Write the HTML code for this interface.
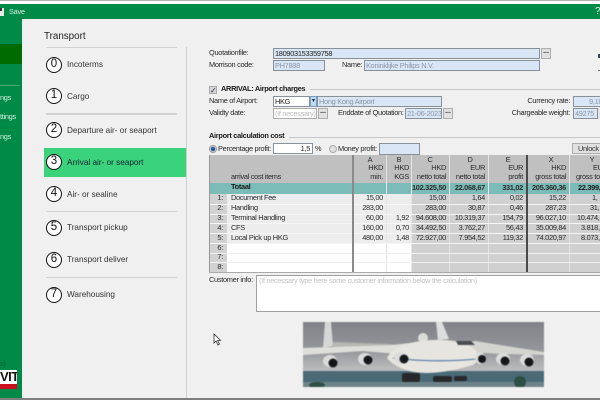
<!DOCTYPE html>
<html><head><meta charset="utf-8">
<style>
html,body{margin:0;padding:0;width:600px;height:400px;overflow:hidden;background:#f0f0f0;font-family:"Liberation Sans",sans-serif;}
#r{position:relative;width:600px;height:400px;overflow:hidden;filter:blur(.3px);}
.a{position:absolute;}
.t{position:absolute;font-size:7.4px;letter-spacing:-.3px;line-height:10px;color:#2a2a2a;white-space:nowrap;}
.b{font-weight:bold;color:#1a1a1a;}
.i{position:absolute;background:#d9e6f5;border:1px solid #88909a;box-sizing:border-box;font-size:7.4px;letter-spacing:-.3px;line-height:9px;color:#8a97a6;padding-left:1px;white-space:nowrap;overflow:hidden;}
.w{background:#fff;color:#222;}
.btn{position:absolute;background:#e1e1e1;border:1px solid #adadad;box-sizing:border-box;font-size:7px;line-height:5px;text-align:center;color:#222;font-weight:bold;}
.c{position:absolute;left:46px;width:16px;height:16px;box-sizing:border-box;border:1.3px solid #111;border-radius:50%;background:#fff;font-size:11.5px;line-height:13.5px;text-align:center;color:#111;}
.l{position:absolute;left:67px;font-size:8.2px;line-height:12px;color:#333;white-space:nowrap;}
.s{position:absolute;left:46px;width:131px;height:1px;background:#d2d2d2;}
.r{position:absolute;font-size:7.4px;letter-spacing:-.3px;line-height:10px;color:#2a2a2a;text-align:right;white-space:nowrap;}
</style></head><body><div id="r">
<div class="a" style="left:0;top:0;width:600px;height:1px;background:#b4b4b4"></div>
<div class="a" style="left:0;top:1px;width:600px;height:3px;background:#fff"></div>
<div class="a" style="left:0;top:4px;width:600px;height:15px;background:#008a47"></div>
<div class="a" style="left:0;top:19px;width:22px;height:379px;background:#008a47"></div>
<div class="a" style="left:0;top:44px;width:22px;height:20px;background:#006b00"></div>
<div class="a" style="left:0;top:85px;width:20px;height:1px;background:#3fa873"></div>
<div class="a" style="left:0;top:8px;width:4px;height:8px;background:#e8e8e8"></div>
<div class="a" style="left:0;top:8px;width:2px;height:3px;background:#333"></div>
<div class="t" style="left:9px;top:7px;color:#d5f0e0">Save</div>
<div class="t" style="left:595px;top:7px;color:#e8f5ee;font-size:10px">?</div>
<div class="t" style="left:0;top:93px;color:#cfeedd">ngs</div>
<div class="t" style="left:0;top:112px;color:#cfeedd">ttings</div>
<div class="t" style="left:0;top:132px;color:#cfeedd">ngs</div>
<div class="t" style="left:0;top:359px;color:#063">s)</div>
<div class="a" style="left:0;top:370px;width:17px;height:14px;background:#fff;color:#111;font-size:13px;line-height:14px;font-weight:bold;overflow:hidden;letter-spacing:-.5px">VIT</div>
<div class="a" style="left:0;top:384px;width:17px;height:5px;background:#c8101e"></div>
<div class="a" style="left:0;top:398px;width:600px;height:2px;background:#7e7e7e"></div>

<div class="a" style="left:44px;top:30px;font-size:9.8px;line-height:13px;color:#222">Transport</div>
<div class="a" style="left:186px;top:47px;width:1px;height:351px;background:#d0d0d0"></div>
<div class="s" style="top:47px"></div>
<div class="s" style="top:113px;height:2px"></div>
<div class="s" style="top:211px"></div>
<div class="s" style="top:277px"></div>
<div class="a" style="left:44px;top:148px;width:142px;height:29px;background:#3ad27a"></div>
<div class="c" style="top:57px">0</div><div class="l" style="top:59px">Incoterms</div>
<div class="c" style="top:88px">1</div><div class="l" style="top:91px">Cargo</div>
<div class="c" style="top:122px">2</div><div class="l" style="top:125px">Departure air- or seaport</div>
<div class="c" style="top:154px">3</div><div class="l" style="top:157px;color:#123">Arrival air- or seaport</div>
<div class="c" style="top:186px">4</div><div class="l" style="top:189px">Air- or sealine</div>
<div class="c" style="top:220px">5</div><div class="l" style="top:222px">Transport pickup</div>
<div class="c" style="top:252px">6</div><div class="l" style="top:254px">Transport deliver</div>
<div class="c" style="top:287px">7</div><div class="l" style="top:289px">Warehousing</div>

<div class="t" style="left:209px;top:48px">Quotationfile:</div>
<div class="i w" style="left:273px;top:48px;width:267px;height:11px;background:#d9e6f5;color:#222">180903153359758</div>
<div class="btn" style="left:541px;top:48px;width:10px;height:11px">...</div>
<div class="t" style="left:209px;top:60px">Morrison code:</div>
<div class="i" style="left:273px;top:60px;width:52px;height:11px">PH7888</div>
<div class="t" style="left:342px;top:60px">Name:</div>
<div class="i" style="left:364px;top:60px;width:176px;height:11px">Koninklijke Philips N.V.</div>
<div class="a" style="left:598px;top:54px;width:2px;height:4px;background:#345"></div>
<div class="a" style="left:598px;top:70px;width:2px;height:1px;background:#666"></div>

<div class="a" style="left:310px;top:89px;width:290px;height:1px;background:#c8c8c8"></div>
<div class="a" style="left:209px;top:86px;width:8px;height:8px;background:#d6d6d6;border:1px solid #aaa;box-sizing:border-box;color:#225;font-size:8px;line-height:7px;text-align:center">✓</div>
<div class="t b" style="left:221px;top:84px">ARRIVAL: Airport charges</div>
<div class="t" style="left:209px;top:96px">Name of Airport:</div>
<div class="i w" style="left:273px;top:96px;width:37px;height:11px">HKG</div>
<div class="a" style="left:310px;top:96px;width:7px;height:11px;background:#bcdcf5;border:1px solid #7a9cc0;box-sizing:border-box;color:#223;font-size:6px;line-height:9px;text-align:center">▾</div>
<div class="i" style="left:317px;top:96px;width:125px;height:11px">Hong Kong Airport</div>
<div class="t" style="left:209px;top:108px">Validty date:</div>
<div class="i w" style="left:273px;top:108px;width:44px;height:11px;color:#bbb;border-color:#aaa">(If necessary)</div>
<div class="btn" style="left:318px;top:108px;width:10px;height:11px">...</div>
<div class="t" style="left:338px;top:108px">Enddate of Quotation:</div>
<div class="i" style="left:405px;top:108px;width:37px;height:11px">21-06-2023</div>
<div class="btn" style="left:443px;top:108px;width:10px;height:11px">...</div>
<div class="r" style="left:480px;width:90px;top:96px">Currency rate:</div>
<div class="i" style="left:573px;top:96px;width:40px;height:11px;padding-left:15px">9,16</div>
<div class="r" style="left:480px;width:90px;top:108px">Chargeable weight:</div>
<div class="i" style="left:573px;top:108px;width:25px;height:11px">49275</div>
<div class="a" style="left:598px;top:108px;width:2px;height:11px;background:#e4e4e4"></div>

<div class="t b" style="left:209px;top:131px">Airport calculation cost</div>
<div class="a" style="left:289px;top:137px;width:311px;height:1px;background:#c8c8c8"></div>
<div class="a" style="left:209px;top:145px;width:8px;height:8px;border-radius:50%;background:radial-gradient(circle,#2a5d8f 0 2px,#dde 2.5px);border:1px solid #999;box-sizing:border-box"></div>
<div class="t" style="left:218px;top:144px">Percentage profit:</div>
<div class="i w" style="left:273px;top:143px;width:40px;height:11px;text-align:right;padding-right:2px">1,5</div>
<div class="t" style="left:315px;top:144px">%</div>
<div class="a" style="left:329px;top:145px;width:8px;height:8px;border-radius:50%;background:#e0e0e0;border:1px solid #aaa;box-sizing:border-box"></div>
<div class="t" style="left:338px;top:144px">Money profit:</div>
<div class="i" style="left:379px;top:143px;width:41px;height:12px"></div>
<div class="a" style="left:572px;top:143px;width:30px;height:11px;background:#e1e1e1;border:1px solid #adadad;box-sizing:border-box;font-size:7.4px;letter-spacing:-.3px;line-height:9px;color:#333;padding-left:5px">Unlock</div>

<!-- table -->
<div class="a" style="left:209px;top:155px;width:391px;height:118px;background:#ededed"></div>
<div class="a" style="left:209px;top:155px;width:391px;height:28px;background:#c0c0c0"></div>
<div class="a" style="left:209px;top:183px;width:391px;height:11px;background:#7bbcb8"></div>
<div class="a" style="left:209px;top:194px;width:18px;height:79px;background:#d2d2d2"></div>
<div class="a" style="left:227px;top:244px;width:125px;height:28px;background:#fff"></div>
<div class="a" style="left:354px;top:244px;width:57px;height:28px;background:#fff"></div>
<div class="a" style="left:411px;top:194px;width:189px;height:78px;background:#d0d0d0"></div>
<div class="a" style="left:449px;top:155px;width:1px;height:117px;background:#e4e4e4"></div>
<div class="a" style="left:488px;top:155px;width:1px;height:117px;background:#e4e4e4"></div>
<div class="a" style="left:569px;top:155px;width:1px;height:117px;background:#e4e4e4"></div>
<div class="a" style="left:386px;top:155px;width:1px;height:117px;background:#e4e4e4"></div>
<div class="a" style="left:411px;top:155px;width:1px;height:117px;background:#e4e4e4"></div>
<div class="a" style="left:209px;top:204px;width:391px;height:1px;background:#f6f6f6"></div>
<div class="a" style="left:209px;top:214px;width:391px;height:1px;background:#f6f6f6"></div>
<div class="a" style="left:209px;top:223px;width:391px;height:1px;background:#f6f6f6"></div>
<div class="a" style="left:209px;top:233px;width:391px;height:1px;background:#f6f6f6"></div>
<div class="a" style="left:209px;top:243px;width:391px;height:1px;background:#f6f6f6"></div>
<div class="a" style="left:209px;top:253px;width:391px;height:1px;background:#f0f0f0"></div>
<div class="a" style="left:209px;top:262px;width:391px;height:1px;background:#f0f0f0"></div>
<div class="a" style="left:352px;top:155px;width:2px;height:117px;background:#8a8a8a"></div>
<div class="a" style="left:526px;top:155px;width:2px;height:117px;background:#4a4a4a"></div>
<div class="a" style="left:209px;top:155px;width:1px;height:118px;background:#999"></div>
<div class="a" style="left:209px;top:272px;width:391px;height:1px;background:#aaa"></div>

<div class="t" style="left:231px;top:172px">arrival cost items</div>
<div class="r" style="left:354px;width:32px;top:155px;text-align:center">A</div>
<div class="r" style="left:354px;width:29px;top:163px">HKD</div>
<div class="r" style="left:354px;width:29px;top:172px">min.</div>
<div class="r" style="left:387px;width:24px;top:155px;text-align:center">B</div>
<div class="r" style="left:387px;width:22px;top:163px">HKD</div>
<div class="r" style="left:387px;width:22px;top:172px">KGS</div>
<div class="r" style="left:411px;width:38px;top:155px;text-align:center">C</div>
<div class="r" style="left:411px;width:35px;top:163px">HKD</div>
<div class="r" style="left:411px;width:35px;top:172px">netto total</div>
<div class="r" style="left:450px;width:40px;top:155px;text-align:center">D</div>
<div class="r" style="left:450px;width:35px;top:163px">EUR</div>
<div class="r" style="left:450px;width:35px;top:172px">netto total</div>
<div class="r" style="left:489px;width:38px;top:155px;text-align:center">E</div>
<div class="r" style="left:489px;width:34px;top:163px">EUR</div>
<div class="r" style="left:489px;width:34px;top:172px">profit</div>
<div class="r" style="left:528px;width:46px;top:155px;text-align:center">X</div>
<div class="r" style="left:528px;width:38px;top:163px">HKD</div>
<div class="r" style="left:528px;width:38px;top:172px">gross total</div>
<div class="r" style="left:570px;width:44px;top:155px;text-align:center">Y</div>
<div class="t" style="left:593px;top:163px">EU</div>
<div class="t" style="left:576px;top:172px">gross to</div>

<div class="t b" style="left:231px;top:182px">Totaal</div>
<div class="r b" style="left:411px;width:35px;top:183px">102.325,50</div>
<div class="r b" style="left:450px;width:35px;top:183px">22.068,67</div>
<div class="r b" style="left:489px;width:34px;top:183px">331,02</div>
<div class="r b" style="left:528px;width:38px;top:183px">205.360,36</div>
<div class="t b" style="left:578px;top:183px">22.399,</div>

<div class="r" style="left:209px;width:14px;top:193px">1:</div>
<div class="t" style="left:231px;top:193px">Document Fee</div>
<div class="r" style="left:354px;width:29px;top:193px">15,00</div>
<div class="r" style="left:411px;width:35px;top:193px">15,00</div>
<div class="r" style="left:450px;width:35px;top:193px">1,64</div>
<div class="r" style="left:489px;width:34px;top:193px">0,02</div>
<div class="r" style="left:528px;width:38px;top:193px">15,22</div>
<div class="t" style="left:592px;top:193px">1,</div>

<div class="r" style="left:209px;width:14px;top:203px">2:</div>
<div class="t" style="left:231px;top:203px">Handling</div>
<div class="r" style="left:354px;width:29px;top:203px">283,00</div>
<div class="r" style="left:411px;width:35px;top:203px">283,00</div>
<div class="r" style="left:450px;width:35px;top:203px">30,87</div>
<div class="r" style="left:489px;width:34px;top:203px">0,46</div>
<div class="r" style="left:528px;width:38px;top:203px">287,23</div>
<div class="t" style="left:590px;top:203px">31,</div>

<div class="r" style="left:209px;width:14px;top:213px">3:</div>
<div class="t" style="left:231px;top:213px">Terminal Handling</div>
<div class="r" style="left:354px;width:29px;top:213px">60,00</div>
<div class="r" style="left:387px;width:22px;top:213px">1,92</div>
<div class="r" style="left:411px;width:35px;top:213px">94.608,00</div>
<div class="r" style="left:450px;width:35px;top:213px">10.319,37</div>
<div class="r" style="left:489px;width:34px;top:213px">154,79</div>
<div class="r" style="left:528px;width:38px;top:213px">96.027,10</div>
<div class="t" style="left:577px;top:213px">10.474,</div>

<div class="r" style="left:209px;width:14px;top:223px">4:</div>
<div class="t" style="left:231px;top:223px">CFS</div>
<div class="r" style="left:354px;width:29px;top:223px">160,00</div>
<div class="r" style="left:387px;width:22px;top:223px">0,70</div>
<div class="r" style="left:411px;width:35px;top:223px">34.492,50</div>
<div class="r" style="left:450px;width:35px;top:223px">3.762,27</div>
<div class="r" style="left:489px;width:34px;top:223px">56,43</div>
<div class="r" style="left:528px;width:38px;top:223px">35.009,84</div>
<div class="t" style="left:581px;top:223px">3.818,</div>

<div class="r" style="left:209px;width:14px;top:233px">5:</div>
<div class="t" style="left:231px;top:233px">Local Pick up HKG</div>
<div class="r" style="left:354px;width:29px;top:233px">480,00</div>
<div class="r" style="left:387px;width:22px;top:233px">1,48</div>
<div class="r" style="left:411px;width:35px;top:233px">72.927,00</div>
<div class="r" style="left:450px;width:35px;top:233px">7.954,52</div>
<div class="r" style="left:489px;width:34px;top:233px">119,32</div>
<div class="r" style="left:528px;width:38px;top:233px">74.020,97</div>
<div class="t" style="left:581px;top:233px">8.073,</div>

<div class="r" style="left:209px;width:14px;top:243px">6:</div>
<div class="r" style="left:209px;width:14px;top:252px">7:</div>
<div class="r" style="left:209px;width:14px;top:262px">8:</div>

<div class="t" style="left:209px;top:275px">Customer info:</div>
<div class="a" style="left:256px;top:275px;width:350px;height:37px;background:#fff;border:1px solid #a0a0a0;box-sizing:border-box;font-size:7.4px;letter-spacing:-.3px;line-height:10px;color:#c4c4c4;padding-left:2px;white-space:nowrap">(If necessary type here some customer information below the calculation)</div>

<svg class="a" style="left:303px;top:322px;filter:blur(.5px)" width="241" height="65" viewBox="0 0 241 65">
<defs><linearGradient id="sky" x1="0" y1="0" x2="0" y2="1"><stop offset="0" stop-color="#808288"/><stop offset=".6" stop-color="#96979c"/><stop offset="1" stop-color="#bcbcbc"/></linearGradient></defs>
<rect width="241" height="48" fill="url(#sky)"/>
<rect y="47" width="241" height="18" fill="#4b6a78"/>
<rect y="60" width="241" height="5" fill="#6e8488"/>
<path d="M0 47Q60 42 241 47L241 49 0 49Z" fill="#b9bab9"/>
<ellipse cx="217" cy="60" rx="6" ry="6" fill="#2e4f43"/>
<ellipse cx="14" cy="63" rx="8" ry="3" fill="#2e4f43"/>
<path d="M20 26L22 0 28 0 30 24Z" fill="#d6d6d6"/>
<path d="M135 18L133 0 139 0 146 17Z" fill="#dedede"/>
<path d="M30 20L85 22 120 26 30 26Z" fill="#b6b6b2"/>
<ellipse cx="120" cy="16" rx="5" ry="5" fill="#dcdcda"/>
<path d="M0 26L89 23 125 19 125 28 95 32 60 29 0 33Z" fill="#dededa"/>
<path d="M241 30L241 33 200 32 165 30 160 22 172 19Z" fill="#d4d4d0"/>
<path d="M84 36Q92 20 130 18 165 17 174 30 177 38 170 43 130 55 106 49 90 44 84 36Z" fill="#e6e5df"/>
<path d="M90 36Q130 41 174 37" stroke="#4b6fa4" stroke-width="1.1" fill="none"/>
<path d="M153 19L168 19 172 23 155 23Z" fill="#4a4e52"/>
<rect x="99" y="51" width="18" height="9" rx="2" fill="#26282c"/>
<rect x="130" y="54" width="19" height="6" rx="2" fill="#26282c"/>
<rect x="151" y="54" width="13" height="5" rx="2" fill="#26282c"/>
<g fill="#dcdcdc"><ellipse cx="27" cy="39" rx="7" ry="6"/><ellipse cx="62" cy="37" rx="7" ry="6"/><ellipse cx="98" cy="36" rx="7" ry="6"/><ellipse cx="177" cy="36" rx="5" ry="6"/><ellipse cx="200" cy="37" rx="7" ry="6"/><ellipse cx="224" cy="38" rx="7" ry="6"/></g>
<g fill="#16171b"><circle cx="30" cy="41" r="4.5"/><circle cx="65" cy="38" r="4.5"/><circle cx="101" cy="37" r="4.5"/><circle cx="179" cy="37" r="4"/><circle cx="202" cy="39" r="4.5"/><circle cx="226" cy="40" r="4.5"/></g>
</svg>

<svg class="a" style="left:213px;top:333px" width="9" height="13" viewBox="0 0 9 13"><path d="M1 1L1 10 3 8 5 12 6.5 11 4.5 7.5 7.5 7.5Z" fill="#fff" stroke="#333" stroke-width=".8"/></svg>
</div></body></html>
